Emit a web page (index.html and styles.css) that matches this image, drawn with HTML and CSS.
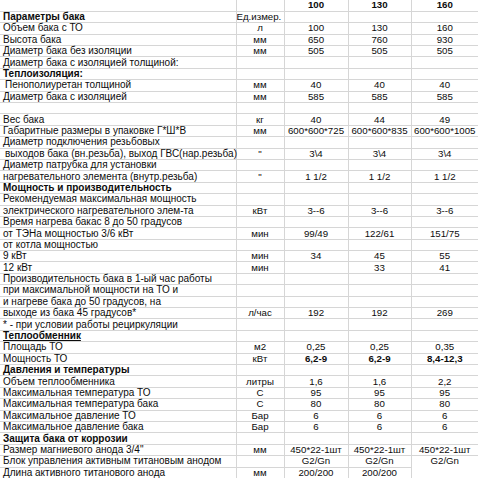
FILE: index.html
```html
<!DOCTYPE html>
<html lang="ru">
<head>
<meta charset="utf-8">
<title>Параметры бака</title>
<link rel="stylesheet" href="styles.css">
</head>
<body>
<table class="sheet">
<colgroup><col class="c1"><col class="c2"><col class="c3"><col class="c4"><col class="c5"></colgroup>
<tbody>
<tr><td></td><td></td><td class="b">100</td><td class="b">130</td><td class="b">160</td></tr>
<tr><td class="b">Параметры бака</td><td class="unit-h">Ед.измер.</td><td></td><td></td><td></td></tr>
<tr><td>Объем бака с ТО</td><td>л</td><td>100</td><td>130</td><td>160</td></tr>
<tr><td>Высота бака</td><td>мм</td><td>650</td><td>760</td><td>930</td></tr>
<tr><td>Диаметр бака без изоляции</td><td>мм</td><td>505</td><td>505</td><td>505</td></tr>
<tr><td>Диаметр бака с изоляцией толщиной:</td><td></td><td></td><td></td><td></td></tr>
<tr><td class="b">Теплоизоляция:</td><td></td><td></td><td></td><td></td></tr>
<tr><td class="ind">Пенополиуретан толщиной</td><td>мм</td><td>40</td><td>40</td><td>40</td></tr>
<tr><td>Диаметр бака с изоляцией</td><td>мм</td><td>585</td><td>585</td><td>585</td></tr>
<tr><td></td><td></td><td></td><td></td><td></td></tr>
<tr><td>Вес бака</td><td>кг</td><td>40</td><td>44</td><td>49</td></tr>
<tr><td>Габаритные размеры в упаковке Г*Ш*В</td><td>мм</td><td>600*600*725</td><td>600*600*835</td><td>600*600*1005</td></tr>
<tr><td>Диаметр подключения резьбовых</td><td></td><td></td><td></td><td></td></tr>
<tr><td class="ind">выходов бака (вн.резьба), выход ГВС(нар.резьба)</td><td>"</td><td>3\4</td><td>3\4</td><td>3\4</td></tr>
<tr><td>Диаметр патрубка для установки</td><td></td><td></td><td></td><td></td></tr>
<tr><td>нагревательного элемента (внутр.резьба)</td><td>"</td><td>1 1/2</td><td>1 1/2</td><td>1 1/2</td></tr>
<tr><td class="b">Мощность и производительность</td><td></td><td></td><td></td><td></td></tr>
<tr><td>Рекомендуемая максимальная мощность</td><td></td><td></td><td></td><td></td></tr>
<tr><td>электрического нагревательного элем-та</td><td>кВт</td><td>3--6</td><td>3--6</td><td>3--6</td></tr>
<tr><td>Время нагрева бакас 8 до 50 градусов</td><td></td><td></td><td></td><td></td></tr>
<tr><td>от ТЭНа мощностью 3/6 кВт</td><td>мин</td><td>99/49</td><td>122/61</td><td>151/75</td></tr>
<tr><td>от котла мощностью</td><td></td><td></td><td></td><td></td></tr>
<tr><td>9 кВт</td><td>мин</td><td>34</td><td>45</td><td>55</td></tr>
<tr><td>12 кВт</td><td>мин</td><td></td><td>33</td><td>41</td></tr>
<tr><td>Производительность бака в 1-ый час работы</td><td></td><td></td><td></td><td></td></tr>
<tr><td>при максимальной мощности на ТО и</td><td></td><td></td><td></td><td></td></tr>
<tr><td>и нагреве бака до 50 градусов, на</td><td></td><td></td><td></td><td></td></tr>
<tr><td>выходе из бака 45 градусов*</td><td>л/час</td><td>192</td><td>192</td><td>269</td></tr>
<tr><td>* - при условии работы рециркуляции</td><td></td><td></td><td></td><td></td></tr>
<tr><td class="b u">Теплообменник</td><td></td><td></td><td></td><td></td></tr>
<tr><td>Площадь ТО</td><td>м2</td><td>0,25</td><td>0,25</td><td>0,35</td></tr>
<tr><td>Мощность ТО</td><td>кВт</td><td class="b">6,2-9</td><td class="b">6,2-9</td><td class="b">8,4-12,3</td></tr>
<tr><td class="b">Давления и температуры</td><td></td><td></td><td></td><td></td></tr>
<tr><td>Объем теплообменника</td><td>литры</td><td>1,6</td><td>1,6</td><td>2,2</td></tr>
<tr><td>Максимальная температура ТО</td><td>С</td><td>95</td><td>95</td><td>95</td></tr>
<tr><td>Максимальная температура бака</td><td>С</td><td>80</td><td>80</td><td>80</td></tr>
<tr><td>Максимальное давление ТО</td><td>Бар</td><td>6</td><td>6</td><td>6</td></tr>
<tr><td>Максимальное давление бака</td><td>Бар</td><td>6</td><td>6</td><td>6</td></tr>
<tr><td class="b">Защита бака от коррозии</td><td></td><td></td><td></td><td></td></tr>
<tr><td>Размер магниевого анода 3/4"</td><td>мм</td><td>450*22-1шт</td><td>450*22-1шт</td><td>450*22-1шт</td></tr>
<tr><td>Блок управления активным титановым анодом</td><td></td><td>G2/Gn</td><td>G2/Gn</td><td class="cut">G2/Gn</td></tr>
<tr><td>Длина активного титанового анода</td><td>мм</td><td>200/200</td><td>200/200</td><td class="blank"></td></tr>
</tbody>
</table>
</body>
</html>
```

FILE: styles.css
```css
html, body {
  margin: 0;
  padding: 0;
  background: #ffffff;
  overflow: hidden;
}

.sheet {
  border-collapse: collapse;
  table-layout: fixed;
  width: 478px;
  font-family: "Liberation Sans", Arial, sans-serif;
  font-size: 9.7px;
  color: #0c0c0c;
}

.c1 { width: 236px; }
.c2 { width: 48px; }
.c3 { width: 64px; }
.c4 { width: 63px; }
.c5 { width: 67px; }

.sheet tr {
  height: 11.4px;
}

.sheet td {
  height: 10px;
  padding: 0;
  border: 1px solid #d6d6d6;
  text-align: center;
  white-space: nowrap;
  overflow: hidden;
  line-height: 10px;
  vertical-align: middle;
}

.sheet td:first-child {
  text-align: left;
  padding-left: 3px;
  border-left: none;
  font-size: 10px;
  overflow: visible;
}

.sheet td:last-child {
  border-right: none;
}

.sheet tr:first-child td {
  border-top: none;
}

.b { font-weight: bold; }
.u { text-decoration: underline; }
.ind { padding-left: 5px !important; }
.unit-h { text-align: left !important; padding-left: 4px; }

.cut {
  border-bottom-color: #ffffff !important;
}

.blank {
  border-color: #ffffff !important;
}
```
